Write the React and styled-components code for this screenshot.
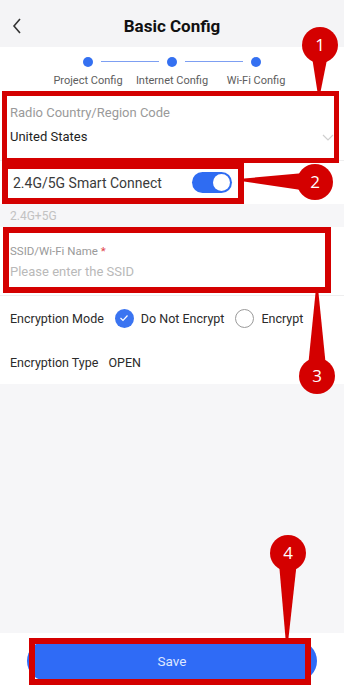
import React from 'react';
import styled, { createGlobalStyle } from 'styled-components';

const GlobalStyle = createGlobalStyle`
  html, body {
    margin: 0;
    padding: 0;
    background: #f6f6f8;
  }
  * {
    box-sizing: border-box;
  }
  body {
    font-family: Roboto, 'Noto Sans', sans-serif;
    color: #222;
  }
`;

const Page = styled.div`
  position: relative;
  width: 344px;
  height: 688px;
  display: flex;
  flex-direction: column;
  background: #f6f6f8;
  overflow: hidden;
`;

const Header = styled.header`
  height: 47px;
  flex: 0 0 47px;
  display: grid;
  grid-template-columns: 40px 1fr 40px;
  align-items: center;
  padding-top: 5px;
  background: #f4f4f6;
`;

const BackBtn = styled.div`
  display: flex;
  justify-content: center;
  padding-right: 6px;
`;

const Title = styled.h1`
  margin: 0;
  text-align: center;
  font-size: 17px;
  font-weight: 700;
  color: #111;
`;

const Stepper = styled.div`
  flex: 0 0 45px;
  background: #fff;
  display: flex;
  justify-content: center;
  padding-top: 10px;
`;

const Step = styled.div`
  position: relative;
  width: 84px;
  display: flex;
  flex-direction: column;
  align-items: center;
  gap: 7px;

  &:not(:last-child)::after {
    content: '';
    position: absolute;
    top: 4px;
    left: calc(50% + 13px);
    width: 58px;
    height: 1px;
    background: #7d9ff2;
  }
`;

const Dot = styled.span`
  width: 10px;
  height: 10px;
  border-radius: 50%;
  background: #3470f1;
`;

const StepLabel = styled.span`
  font-size: 11px;
  line-height: 13px;
  color: #5d5d5d;
  white-space: nowrap;
`;

const Field = styled.div`
  position: relative;
  background: #fff;
  padding: ${(p) => p.$pt}px 10px ${(p) => p.$pb}px;
  border-bottom: 1px solid #eeeeef;
`;

const FieldLabel = styled.div`
  font-size: ${(p) => p.$size || 12}px;
  line-height: 16px;
  color: #9a9a9a;

  & b {
    color: #e0434b;
    font-weight: 400;
  }
`;

const FieldValue = styled.div`
  margin-top: ${(p) => p.$gap}px;
  font-size: 13px;
  line-height: 18px;
  color: ${(p) => (p.$placeholder ? '#b9b9b9' : '#1e1e1e')};
  display: flex;
  justify-content: space-between;
  align-items: center;
`;

const ToggleRow = styled.div`
  flex: 0 0 43px;
  background: #fff;
  display: flex;
  align-items: center;
  padding: 0 0 0 13px;
  gap: 30px;
  font-size: 14px;
  color: #3a3a3a;
`;

const Toggle = styled.span`
  position: relative;
  width: 40px;
  height: 21px;
  border-radius: 11px;
  background: ${(p) => (p.$on ? '#2f6cf2' : '#ccc')};

  &::after {
    content: '';
    position: absolute;
    top: 2px;
    ${(p) => (p.$on ? 'right: 2px;' : 'left: 2px;')}
    width: 17px;
    height: 17px;
    border-radius: 50%;
    background: #fff;
  }
`;

const Hint = styled.div`
  flex: 0 0 23px;
  padding: 3px 10px 0;
  font-size: 12px;
  line-height: 18px;
  color: #c2c2c2;
`;

const Row = styled.div`
  flex: 0 0 ${(p) => p.$h}px;
  background: #fff;
  display: flex;
  align-items: center;
  padding: 0 10px;
  font-size: 12.5px;
  color: #2b2b2b;
  gap: ${(p) => p.$gap || 10}px;
`;

const RadioGroup = styled.label`
  display: flex;
  align-items: center;
  gap: 7px;
`;

const Radio = styled.span`
  width: 19px;
  height: 19px;
  border-radius: 50%;
  display: flex;
  align-items: center;
  justify-content: center;
  background: ${(p) => (p.$checked ? '#3a74f1' : '#fff')};
  border: ${(p) => (p.$checked ? 'none' : '1.5px solid #9a9a9a')};
`;

const Spacer = styled.div`
  flex: 1;
  background: #f6f6f8;
`;

const Footer = styled.div`
  flex: 0 0 55px;
  background: #fff;
  padding: 8px 27px 0;
`;

const SaveButton = styled.button`
  width: 100%;
  height: 40px;
  border: none;
  border-radius: 20px;
  background: #2f6bf6;
  color: #dfe8ff;
  font-family: Roboto, sans-serif;
  font-size: 13.5px;
`;

/* annotation overlay */
const Callout = styled.div`
  position: absolute;
  left: ${(p) => p.$x}px;
  top: ${(p) => p.$y}px;
  width: ${(p) => p.$w}px;
  height: ${(p) => p.$h}px;
  border: ${(p) => p.$b || 6}px solid #d40000;
  pointer-events: none;
`;

const PinLayer = styled.svg`
  position: absolute;
  left: 0;
  top: 0;
  width: 344px;
  height: 688px;
  pointer-events: none;
`;

const Pin = ({ cx, cy, tx, ty, n, r = 18 }) => {
  const dx = tx - cx;
  const dy = ty - cy;
  const len = Math.hypot(dx, dy);
  const px = -dy / len;
  const py = dx / len;
  const w = r * 0.55;
  const tw = 1.5;
  const pts = [
    [cx + px * w, cy + py * w],
    [tx + px * tw, ty + py * tw],
    [tx - px * tw, ty - py * tw],
    [cx - px * w, cy - py * w],
  ]
    .map((p) => p.join(','))
    .join(' ');
  return (
    <g>
      <polygon points={pts} fill="#d40000" />
      <circle cx={cx} cy={cy} r={r} fill="#d40000" />
      <text
        x={cx}
        y={cy + 6}
        textAnchor="middle"
        fontSize="17"
        fontFamily="'Open Sans', 'Liberation Sans', sans-serif"
        fill="#fff"
      >
        {n}
      </text>
    </g>
  );
};

const steps = ['Project Config', 'Internet Config', 'Wi-Fi Config'];

export default function App() {
  return (
    <>
      <GlobalStyle />
      <Page>
        <Header>
          <BackBtn>
            <svg width="10" height="16" viewBox="0 0 10 16">
              <polyline points="8,1 2,8 8,15" fill="none" stroke="#333" strokeWidth="1.6" />
            </svg>
          </BackBtn>
          <Title>Basic Config</Title>
          <span />
        </Header>

        <Stepper>
          {steps.map((s) => (
            <Step key={s}>
              <Dot />
              <StepLabel>{s}</StepLabel>
            </Step>
          ))}
        </Stepper>

        <Field $pt={13} $pb={14}>
          <FieldLabel $size={13}>Radio Country/Region Code</FieldLabel>
          <FieldValue $gap={7}>
            United States
            <svg width="12" height="7" viewBox="0 0 12 7">
              <polyline points="1,1 6,6 11,1" fill="none" stroke="#cfcfcf" strokeWidth="1.2" />
            </svg>
          </FieldValue>
        </Field>

        <ToggleRow>
          2.4G/5G Smart Connect
          <Toggle $on />
        </ToggleRow>

        <Hint>2.4G+5G</Hint>

        <Field $pt={16} $pb={14}>
          <FieldLabel $size={11.5}>
            SSID/Wi-Fi Name <b>*</b>
          </FieldLabel>
          <FieldValue $gap={4} $placeholder>
            Please enter the SSID
          </FieldValue>
        </Field>

        <Row $h={44} $gap={11}>
          Encryption Mode
          <RadioGroup>
            <Radio $checked>
              <svg width="10" height="8" viewBox="0 0 10 8">
                <polyline points="1.5,4 4,6.5 8.5,1.5" fill="none" stroke="#fff" strokeWidth="1.2" />
              </svg>
            </Radio>
            Do Not Encrypt
          </RadioGroup>
          <RadioGroup>
            <Radio />
            Encrypt
          </RadioGroup>
        </Row>

        <Row $h={44}>
          Encryption Type
          <span>OPEN</span>
        </Row>

        <Spacer />

        <Footer>
          <SaveButton>Save</SaveButton>
        </Footer>

        <Callout $x={2} $y={91} $w={337} $h={72} $b={5} />
        <Callout $x={2} $y={163} $w={242} $h={41} />
        <Callout $x={3} $y={227} $w={328} $h={66} />
        <Callout $x={29} $y={638} $w={282} $h={47} />

        <PinLayer viewBox="0 0 344 688">
          <Pin cx={320} cy={45} tx={319} ty={92} n={1} />
          <Pin cx={315} cy={182} tx={244} ty={180} n={2} />
          <Pin cx={317} cy={376} tx={317} ty={293} n={3} />
          <Pin cx={288} cy={553} tx={287} ty={638} n={4} />
        </PinLayer>
      </Page>
    </>
  );
}
